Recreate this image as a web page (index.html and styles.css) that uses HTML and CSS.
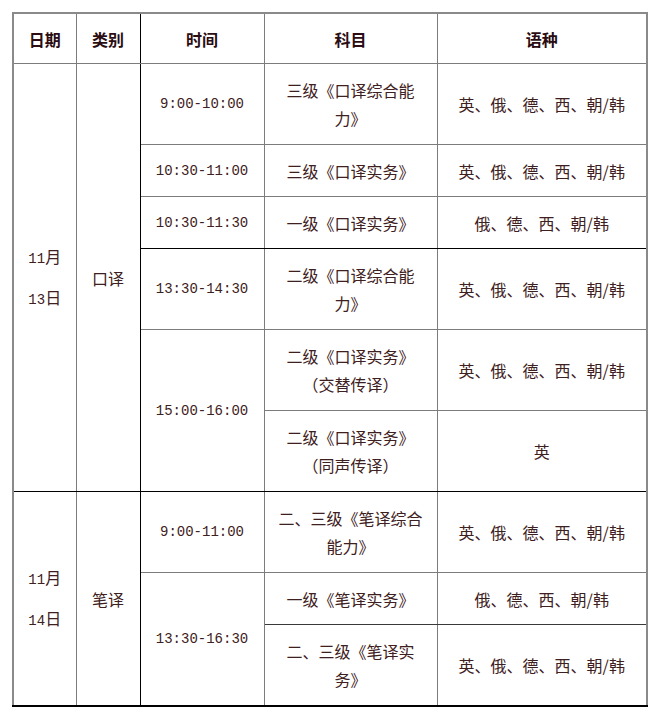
FILE: index.html
```html
<!DOCTYPE html>
<html lang="zh-CN">
<head>
<meta charset="utf-8">
<title>考试时间安排</title>
<link rel="stylesheet" href="styles.css">
</head>
<body>
<table class="sched">
  <colgroup>
    <col class="c1"><col class="c2"><col class="c3"><col class="c4"><col class="c5">
  </colgroup>
  <thead>
    <tr class="h">
      <th>日期</th>
      <th class="br">类别</th>
      <th>时间</th>
      <th>科目</th>
      <th>语种</th>
    </tr>
  </thead>
  <tbody>
    <tr class="r2">
      <td rowspan="6" class="date bb"><span class="n">11</span>月<br><span class="n">13</span>日</td>
      <td rowspan="6" class="br bb">口译</td>
      <td class="t">9:00-10:00</td>
      <td class="s">三级《口译综合能力》</td>
      <td>英、俄、德、西、朝/韩</td>
    </tr>
    <tr class="r1">
      <td class="t">10:30-11:00</td>
      <td class="s">三级《口译实务》</td>
      <td>英、俄、德、西、朝/韩</td>
    </tr>
    <tr class="r1">
      <td class="t bb">10:30-11:30</td>
      <td class="s bb">一级《口译实务》</td>
      <td class="bb">俄、德、西、朝/韩</td>
    </tr>
    <tr class="r2">
      <td class="t">13:30-14:30</td>
      <td class="s">二级《口译综合能力》</td>
      <td>英、俄、德、西、朝/韩</td>
    </tr>
    <tr class="r2">
      <td rowspan="2" class="t bb">15:00-16:00</td>
      <td class="s">二级《口译实务》（交替传译）</td>
      <td>英、俄、德、西、朝/韩</td>
    </tr>
    <tr class="r2">
      <td class="s bb">二级《口译实务》（同声传译）</td>
      <td class="bb">英</td>
    </tr>
    <tr class="r2">
      <td rowspan="3" class="date last"><span class="n">11</span>月<br><span class="n">14</span>日</td>
      <td rowspan="3" class="br last">笔译</td>
      <td class="t">9:00-11:00</td>
      <td class="s">二、三级《笔译综合能力》</td>
      <td>英、俄、德、西、朝/韩</td>
    </tr>
    <tr class="r1">
      <td rowspan="2" class="t last">13:30-16:30</td>
      <td class="s dk">一级《笔译实务》</td>
      <td class="dk">俄、德、西、朝/韩</td>
    </tr>
    <tr class="r2">
      <td class="s last">二、三级《笔译实务》</td>
      <td class="last">英、俄、德、西、朝/韩</td>
    </tr>
  </tbody>
</table>
</body>
</html>
```

FILE: styles.css
```css
html, body {
  margin: 0;
  padding: 0;
  background: #ffffff;
}

.sched {
  margin: 12px 0 0 12px;
  width: 634px;
  table-layout: fixed;
  border-collapse: collapse;
  border: 2px solid #8a8a8a;
  font-family: "Noto Sans CJK SC", "Noto Sans", sans-serif;
  font-size: 16px;
  color: #3e2020;
  text-spacing-trim: space-all;
}

.c1 { width: 63px; }
.c2 { width: 64px; }
.c3 { width: 124px; }
.c4 { width: 173px; }
.c5 { width: 210px; }

.sched th,
.sched td {
  border: 1px solid #7c7c7c;
  padding: 0 8px;
  text-align: center;
  vertical-align: middle;
  line-height: 28px;
}

.sched th {
  font-weight: bold;
  color: #2a0c12;
  height: 49px;
}

.r1 td { height: 51px; }
.r2 td { height: 80px; }

.sched .s {
  font-variant-east-asian: full-width;
}

.sched .br { border-right: 1px solid #000; }
.sched .bb { border-bottom: 1px solid #000; }
.sched .dk { border-bottom: 1px solid #3a3a3a; }
.sched .last { border-bottom: 2px solid #000; }

.sched .date {
  line-height: 38px;
  padding: 0 4px;
}

.n {
  font-family: "Liberation Mono", monospace;
  font-size: 14px;
}

.sched .t {
  font-family: "Liberation Mono", monospace;
  font-size: 14px;
}
```
